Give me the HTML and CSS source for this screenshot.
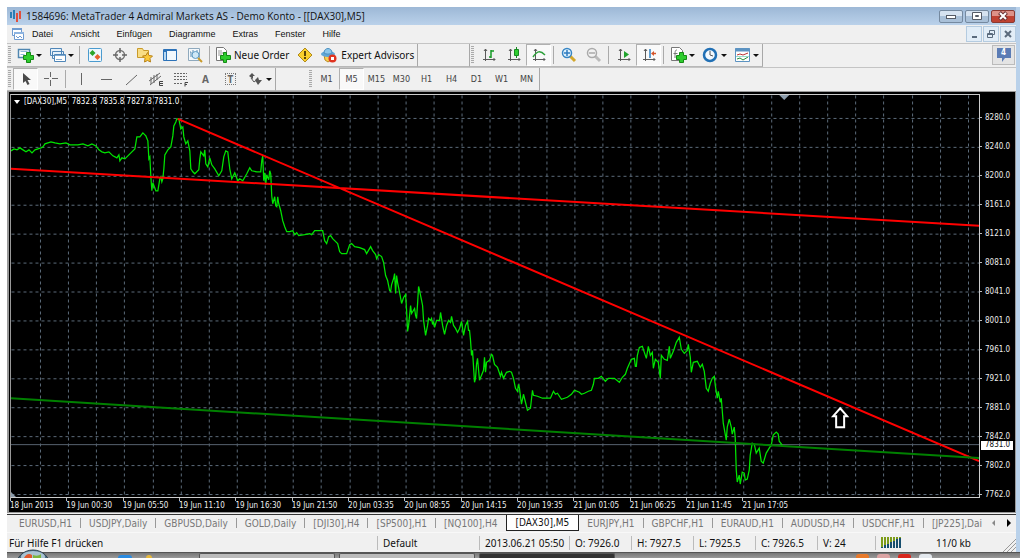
FILE: index.html
```html
<!DOCTYPE html>
<html lang="de">
<head>
    <meta charset="utf-8">
    <title>1584696: MetaTrader 4 Admiral Markets AS - Demo Konto - [[DAX30],M5]</title>
    <link rel="stylesheet" href="styles.css">
</head>
<body>
<div class="window">
    <header class="titlebar">
        <svg class="logo" width="12" height="14" viewBox="0 0 12 14"><path d="M1 3v6M4 1v9" stroke="#2a7fb5" stroke-width="2"/><path d="M7 4v9M10 2v8" stroke="#e0503c" stroke-width="2"/></svg>
        <h1>1584696: MetaTrader 4 Admiral Markets AS - Demo Konto - [[DAX30],M5]</h1>
        <div class="winbuttons">
            <button aria-label="Minimieren"><svg width="12" height="10" viewBox="0 0 12 10"><rect x="1.500" y="4.500" width="9" height="3" fill="#fff" stroke="#555b66"/></svg></button>
            <button aria-label="Maximieren"><svg width="12" height="10" viewBox="0 0 12 10"><path d="M1.500 1.500h9v7h-9zM4.500 4.500h3v1h-3z" fill="#fff" stroke="#555b66"/></svg></button>
            <button class="close" aria-label="Schließen"><svg width="12" height="10" viewBox="0 0 12 10"><path d="M2.500 1.500l7 7M9.500 1.500l-7 7" stroke="#6a3030" stroke-width="4"/><path d="M3 2l6 6M9 2l-6 6" stroke="#fff" stroke-width="2"/></svg></button>
        </div>
    </header>

    <nav class="menubar">
        <svg class="docicon" width="14" height="14" viewBox="0 0 14 14"><path d="M1.500 1.500h9v7h-9z" fill="#fff" stroke="#6f9bd0"/><path d="M1 2h10" stroke="#6f9bd0" stroke-width="2"/><path d="M3.500 5.500h9v7h-9z" fill="#fff" stroke="#6f9bd0"/><path d="M3 6h10" stroke="#8db4e0" stroke-width="2"/><path d="M5 9l2 2 2-2 2 2" fill="none" stroke="#6f9bd0"/></svg>
        <a href="#">Datei</a>
        <a href="#">Ansicht</a>
        <a href="#">Einfügen</a>
        <a href="#">Diagramme</a>
        <a href="#">Extras</a>
        <a href="#">Fenster</a>
        <a href="#">Hilfe</a>
        <div class="mdibuttons">
            <button aria-label="Diagramm minimieren"><svg width="10" height="10" viewBox="0 0 10 10"><path d="M3 8h5" stroke="#5b6b7d" stroke-width="2"/></svg></button>
            <button aria-label="Diagramm wiederherstellen"><svg width="10" height="10" viewBox="0 0 10 10"><path d="M3.500 4V1.500h5v4H7M1.500 4.500h5v4h-5zM1.500 5.500h5" fill="none" stroke="#5b6b7d"/></svg></button>
            <button aria-label="Diagramm schließen"><svg width="10" height="10" viewBox="0 0 10 10"><path d="M2 2l6 6M8 2l-6 6" stroke="#5b6b7d" stroke-width="2"/></svg></button>
        </div>
    </nav>

    <div class="toolrow">
        <div class="group">
            <i class="grip"></i>
            <button class="tool drop" aria-label="Neues Diagramm"><svg width="18" height="16" viewBox="0 0 18 16"><path d="M1.500 2.500h11v8h-11z" fill="#fff" stroke="#4f86b0" stroke-width="1.500"/><path d="M3.500 4.500h7M3.500 7.500h4" stroke="#8db8d8"/><path d="M9.500 5.500h4v3h3v4h-3v3h-4v-3h-3v-4h3z" fill="#2ecc2e" stroke="#158a15"/></svg></button>
            <button class="tool drop" aria-label="Profile"><svg width="18" height="16" viewBox="0 0 18 16"><path d="M1.500 1.500h11v7h-11zM3.500 4.500h11v7h-11z" fill="#e6f1fa" stroke="#4f86b8"/><path d="M5.500 7.500h11v7h-11z" fill="#fff" stroke="#4f86b8"/><path d="M6 8.500h10M7 12.500h6" stroke="#7fa9cf"/></svg></button>
            <i class="sep"></i>
            <button class="tool" aria-label="Marktübersicht"><svg width="16" height="16" viewBox="0 0 16 16"><rect x="1.500" y="1.500" width="13" height="13" rx="1" fill="#eef7fd" stroke="#4b9bcf"/><path d="M5.500 3l3 3-3 3-3-3z" fill="#2ba52b"/><path d="M10.500 7l3 3-3 3-3-3z" fill="#e8622c"/></svg></button>
            <button class="tool" aria-label="Datenfenster"><svg width="16" height="16" viewBox="0 0 16 16"><circle cx="8" cy="8" r="4.500" fill="none" stroke="#777" stroke-width="1.500"/><path d="M8 1v5M8 10v5M1 8h5M10 8h5" stroke="#666" stroke-width="1.500"/></svg></button>
            <button class="tool" aria-label="Navigator"><svg width="16" height="16" viewBox="0 0 16 16"><path d="M.5 1.500h5l1 2h5v7H.5z" fill="#f8dd85" stroke="#c99a2a"/><path d="M10.500 5.500l1.500 3 3.500.5-2.500 2.500.5 3.500-3-1.500-3 1.500.5-3.500L5.500 9 9 8.500z" fill="#fbc93a" stroke="#b8831a"/></svg></button>
            <button class="tool" aria-label="Terminal"><svg width="16" height="16" viewBox="0 0 16 16"><rect x="1" y="2" width="14" height="12" rx="1" fill="#2c72b8"/><path d="M5 4h9v9H5z" fill="#f2f8fd"/><path d="M2 5h2v8H2z" fill="#b9d8f0"/></svg></button>
            <button class="tool" aria-label="Strategietester"><svg width="16" height="16" viewBox="0 0 16 16"><path d="M1.500 1.500h11v12h-11z" fill="#f4f8fb" stroke="#8fa9bd"/><path d="M3 5h1v5M6 3v4M10 3v3" fill="none" stroke="#5d8fb5"/><circle cx="8.500" cy="8" r="3.500" fill="#cfe8f7" stroke="#5d9ac4"/><path d="M11 11l4 4" stroke="#c99a2a" stroke-width="2"/></svg></button>
            <i class="sep"></i>
            <button class="tool wide"><svg width="16" height="16" viewBox="0 0 16 16"><path d="M1.500.5h7l3 3v10h-10z" fill="#fff" stroke="#777"/><path d="M3 4h4M3 6h6M3 8h4" stroke="#999"/><path d="M8.500 5.500h3v3h4v4h-4v3h-3v-3h-3v-4h3z" fill="#2ecc2e" stroke="#158a15"/></svg>Neue Order</button>
            <button class="tool" aria-label="MetaEditor"><svg width="16" height="16" viewBox="0 0 16 16"><path d="M8 1l7 7-7 7-7-7z" fill="#fbd02c" stroke="#b08a1c"/><path d="M8 4v5M8 10v2" stroke="#5b4508" stroke-width="2"/></svg></button>
            <button class="tool wide"><svg width="18" height="16" viewBox="0 0 18 16"><path d="M4 8h8l-1 5-3 2-3-2z" fill="#f7cf52" stroke="#bb8b22"/><ellipse cx="8" cy="7" rx="7" ry="3" fill="#5ea6d6"/><path d="M4 6c0-6 8-6 8 0-2 1.500-6 1.500-8 0z" fill="#8cc7ea" stroke="#4b8fbf"/><circle cx="12.500" cy="11.500" r="4" fill="#e03420"/><path d="M11 10h3v3h-3z" fill="#fff"/></svg>Expert Advisors</button>
        </div>
        <div class="group blank"></div>
        <div class="group">
            <i class="grip"></i>
            <button class="tool" aria-label="Balkendiagramm"><svg width="16" height="16" viewBox="0 0 16 16"><path d="M4.500 2v12M2 12.500h12M3 4l1.500-2L6 4M12.500 11l1.500 1.500-1.500 1.500" fill="none" stroke="#5a5a5a"/><path d="M10 3v8M10 4h3M8 10h2" stroke="#169a26" stroke-width="1.500"/></svg></button>
            <button class="tool" aria-label="Kerzen"><svg width="16" height="16" viewBox="0 0 16 16"><path d="M4.500 2v12M2 12.500h12M3 4l1.500-2L6 4M12.500 11l1.500 1.500-1.500 1.500" fill="none" stroke="#5a5a5a"/><path d="M10.500 0v11" stroke="#168a20"/><path d="M8.500 2.500h4v6h-4z" fill="#2ecc2e" stroke="#168a20"/></svg></button>
            <button class="tool pressed" aria-label="Linienchart"><svg width="16" height="16" viewBox="0 0 16 16"><path d="M4.500 2v12M2 12.500h12M3 4l1.500-2L6 4M12.500 11l1.500 1.500-1.500 1.500" fill="none" stroke="#5a5a5a"/><path d="M2 10c4-6 7-7 12-2" fill="none" stroke="#2ca03a" stroke-width="1.500"/></svg></button>
            <i class="sep"></i>
            <button class="tool" aria-label="Vergrößern"><svg width="16" height="16" viewBox="0 0 16 16"><path d="M9 9l5 5" stroke="#d3a72c" stroke-width="3"/><circle cx="6" cy="6" r="4.500" fill="#e0f2fd" stroke="#3685c5" stroke-width="1.500"/><path d="M6 3v6M3 6h6" stroke="#2f7cc0" stroke-width="1.500"/></svg></button>
            <button class="tool" aria-label="Verkleinern"><svg width="16" height="16" viewBox="0 0 16 16"><path d="M9 9l5 5" stroke="#bbb" stroke-width="3"/><circle cx="6" cy="6" r="4.500" fill="#f2f2f2" stroke="#aaa" stroke-width="1.500"/><path d="M3 6h6" stroke="#aaa" stroke-width="1.500"/></svg></button>
            <i class="sep"></i>
            <button class="tool" aria-label="Automatisch scrollen"><svg width="16" height="16" viewBox="0 0 16 16"><path d="M4.500 2v12M2 12.500h12M3 4l1.500-2L6 4M12.500 11l1.500 1.500-1.500 1.500" fill="none" stroke="#5a5a5a"/><path d="M8 4l5 3.500L8 11z" fill="#1fa32c"/></svg></button>
            <button class="tool pressed" aria-label="Chartverschiebung"><svg width="16" height="16" viewBox="0 0 16 16"><path d="M4.500 2v12M2 12.500h12M3 4l1.500-2L6 4M12.500 11l1.500 1.500-1.500 1.500" fill="none" stroke="#5a5a5a"/><path d="M9 2v9" stroke="#2c7fc0" stroke-width="1.500"/><path d="M15 6.500h-3" stroke="#d3542a" stroke-width="1.500"/><path d="M13 4v5l-3-2.500z" fill="#d3542a"/></svg></button>
            <i class="sep"></i>
            <button class="tool drop" aria-label="Indikatoren"><svg width="18" height="16" viewBox="0 0 18 16"><path d="M1.500.5h8l3 3v10h-11z" fill="#fff" stroke="#777"/><path d="M7 3C5 3 5 4 5 11M3.500 6.500h4" fill="none" stroke="#777"/><path d="M9.500 5.500h4v3h3v4h-3v3h-4v-3h-3v-4h3z" fill="#2ecc2e" stroke="#158a15"/></svg></button>
            <button class="tool drop" aria-label="Zeitrahmen"><svg width="18" height="16" viewBox="0 0 18 16"><circle cx="8" cy="8" r="6" fill="#f4faff" stroke="#2170b5" stroke-width="2.500"/><path d="M8 4v4l3 1" fill="none" stroke="#555"/></svg></button>
            <button class="tool drop" aria-label="Vorlagen"><svg width="18" height="16" viewBox="0 0 18 16"><path d="M1.500 1.500h14v13h-14z" fill="#fff" stroke="#5c93c2"/><path d="M1 3h15" stroke="#5c93c2" stroke-width="3"/><path d="M3 8l3-1 3 1 5-2" fill="none" stroke="#b33"/><path d="M3 12l3-1 3 2 5-3" fill="none" stroke="#2a8f3a"/><path d="M2 9.500h13" stroke="#9dc"/></svg></button>
        </div>
        <button class="notify" aria-label="4 Nachrichten"><svg width="16" height="16" viewBox="0 0 16 16"><path d="M1 1h14v10h-6l-3 4v-4H1z" fill="#5b7cb5"/></svg><span>4</span></button>
    </div>

    <div class="toolrow">
        <div class="group">
            <i class="grip"></i>
            <button class="tool pressed" aria-label="Cursor"><svg width="16" height="16" viewBox="0 0 16 16"><path d="M5 2v10l2.500-2 2 4 2-1-2-4H13z" fill="#4a4a4a"/></svg></button>
            <button class="tool" aria-label="Fadenkreuz"><svg width="16" height="16" viewBox="0 0 16 16"><path d="M7.500 1v5M7.500 9v6M1 7.500h5M9 7.500h6" stroke="#666"/></svg></button>
            <i class="sep"></i>
            <button class="tool" aria-label="Vertikale Linie"><svg width="16" height="16" viewBox="0 0 16 16"><path d="M8.500 2v12" stroke="#666"/></svg></button>
            <button class="tool" aria-label="Horizontale Linie"><svg width="16" height="16" viewBox="0 0 16 16"><path d="M3 8.500h11" stroke="#666"/></svg></button>
            <button class="tool" aria-label="Trendlinie"><svg width="16" height="16" viewBox="0 0 16 16"><path d="M3 14L14 4" stroke="#666"/></svg></button>
            <button class="tool" aria-label="Kanal"><svg width="16" height="16" viewBox="0 0 16 16"><path d="M1 10l11-8M2 14l11-9M3 6v7M6 4v8M9 3v6" stroke="#666"/><path d="M15 10.500h-3.500v4H15M12 12.500h3" fill="none" stroke="#444"/></svg></button>
            <button class="tool" aria-label="Fibonacci"><svg width="16" height="16" viewBox="0 0 16 16"><path d="M1 2.500h13M1 5.500h13M1 8.500h13M1 12.500h9" stroke="#666" stroke-dasharray="2 1"/><path d="M15 11.500h-3v4M12 13.500h2" fill="none" stroke="#444"/></svg></button>
            <button class="tool letter">A</button>
            <button class="tool letter"><span class="textbox">T</span></button>
            <button class="tool drop" aria-label="Pfeile"><svg width="18" height="16" viewBox="0 0 18 16"><path d="M5 2l3 3H6v3L2 5zM8 9l3-3 1 3h3l-4 5z" fill="#555"/><path d="M4 7l3 4 4-3" fill="none" stroke="#555"/></svg></button>
        </div>
        <div class="group gap"></div>
        <div class="group">
            <i class="grip"></i>
            <button class="tool period">M1</button>
            <button class="tool period pressed">M5</button>
            <button class="tool period">M15</button>
            <button class="tool period">M30</button>
            <button class="tool period">H1</button>
            <button class="tool period">H4</button>
            <button class="tool period">D1</button>
            <button class="tool period">W1</button>
            <button class="tool period">MN</button>
        </div>
    </div>

    <main class="chart">
        <div class="plot">
            <p class="quote">[DAX30],M5&nbsp; 7832.8 7835.8 7827.8 7831.0</p>
            <svg viewBox="11 94 969 403" preserveAspectRatio="none">
                <!-- grid -->
                <g class="grid" transform="translate(.5 .5)">
                    <path d="M40 94V497M68 94V497M96 94V497M124 94V497M153 94V497M181 94V497M209 94V497M237 94V497M265 94V497M293 94V497M321 94V497M350 94V497M378 94V497M406 94V497M434 94V497M462 94V497M490 94V497M519 94V497M547 94V497M575 94V497M603 94V497M631 94V497M659 94V497M687 94V497M716 94V497M744 94V497M772 94V497M800 94V497M828 94V497M856 94V497M884 94V497M913 94V497M941 94V497M969 94V497"/>
                    <path d="M11 117H980M11 146H980M11 175H980M11 204H980M11 233H980M11 262H980M11 291H980M11 320H980M11 349H980M11 378H980M11 407H980M11 436H980M11 465H980M11 494H980"/>
                </g>
                <path class="bid" d="M11 444.500H980"/>
                <!-- price -->
                <polyline class="price" points="11,150 14,148 17,149 20,147 23,149 26,151 29,149 32,152 35,149 38,148 41,147 43,146 45,143 48,142 51,141 55,142 60,143 66,142 70,144 78,144 83,143 88,145 92,143 96,145 99,149 102,151 105,152 109,151 113,155 117,157 119,154 120,160 122,157 125,158 128,155 131,152 135,148 136,142 137,136 140,136 143,132 146,135 148,140 149,158 150,156 151,176 152,190 153,182 156,190 158,190 160,178 161,176 162,181 163,178 164,168 165,154 168,149 171,146 173,135 174,125 176,121 177,118 179,118 181,128 183,126 184,136 186,143 188,140 190,150 191,168 193,171 195,173 199,169 200,158 201,151 204,155 205,149 206,163 208,166 210,157 212,164 215,168 219,175 222,170 224,156 226,150 228,151 230,168 232,178 235,172 238,180 240,178 243,180 247,173 250,167 252,170 257,171 261,171 262,160 263,155 264,180 265,172 266,184 267,174 269,179 270,170 271,173 272,195 273,203 275,196 276,205 277,206 278,196 279,203 281,210 283,220 285,226 287,231 290,231 293,230 295,234 297,232 299,235 305,234 310,233 312,234 315,230 323,230 325,240 327,243 329,236 331,235 333,238 335,240 338,243 340,251 342,253 347,253 350,244 352,243 355,246 360,247 365,249 367,253 371,246 373,250 376,254 377,258 379,254 382,256 384,262 386,275 388,280 390,290 391,291 392,284 394,278 395,273 396,293 397,275 398,282 400,292 402,303 404,297 406,294 407,310 408,331 409,325 411,305 412,313 415,308 416,315 417,318 418,303 419,286 420,290 422,300 423,305 424,320 426,335 428,325 429,318 431,320 432,318 433,324 434,321 435,327 437,320 440,320 441,312 443,325 445,334 447,325 449,320 451,322 452,316 454,325 456,328 458,332 460,328 462,321 464,335 466,325 468,321 469,330 470,330 471,340 472,355 473,350 475,382 476,378 477,364 478,358 480,380 482,375 484,370 485,357 486,372 487,362 490,360 492,354 493,355 495,364 498,367 501,376 502,372 504,378 507,372 510,371 512,372 514,378 516,388 518,391 519,384 520,388 522,404 524,394 526,402 528,410 531,408 533,390 534,395 538,396 543,398 551,398 554,391 556,394 558,393 562,399 568,397 572,394 575,390 580,392 582,394 585,393 589,391 592,390 594,384 595,378 599,378 602,376 606,381 609,378 615,378 620,382 623,377 626,374 628,368 632,359 635,358 636,366 637,366 638,355 640,347 643,346 645,352 647,358 649,346 651,355 653,352 654,368 656,359 659,362 661,378 662,355 665,359 668,360 670,346 671,358 674,351 677,342 680,337 682,349 685,353 688,350 689,344 691,357 692,372 694,362 698,361 701,367 703,364 705,371 707,388 709,391 711,383 713,378 715,376 716,385 718,398 719,391 721,402 722,398 724,423 727,440 728,427 730,419 732,427 733,434 735,427 736,438 737,470 738,482 740,475 741,484 743,472 745,473 746,480 748,479 750,470 751,455 753,443 755,444 757,453 760,448 762,461 764,463 767,453 770,448 772,445 774,435 777,432 779,434 780,441 783,445"/>
                <!-- trend lines -->
                <path class="resist" d="M178 118L980 461M11 168L980 225"/>
                <path class="support" d="M11 398L980 458"/>
                <path class="marker" d="M780 94h10l-5 5zM11 492v5h5z"/>
                <path class="arrow" d="M841 408l7 8h-3v11h-8v-11h-3z"/>
            </svg>
        </div>
        <ul class="prices">
            <li>8280.0</li>
            <li>8240.0</li>
            <li>8200.0</li>
            <li>8161.0</li>
            <li>8121.0</li>
            <li>8081.0</li>
            <li>8041.0</li>
            <li>8001.0</li>
            <li>7961.0</li>
            <li>7921.0</li>
            <li>7881.0</li>
            <li>7842.0</li>
            <li>7802.0</li>
            <li>7762.0</li>
            <li class="current">7831.0</li>
        </ul>
        <ul class="times">
            <li>18 Jun 2013</li>
            <li>19 Jun 00:30</li>
            <li>19 Jun 05:50</li>
            <li>19 Jun 11:10</li>
            <li>19 Jun 16:30</li>
            <li>19 Jun 21:50</li>
            <li>20 Jun 03:35</li>
            <li>20 Jun 08:55</li>
            <li>20 Jun 14:15</li>
            <li>20 Jun 19:35</li>
            <li>21 Jun 01:05</li>
            <li>21 Jun 06:25</li>
            <li>21 Jun 11:45</li>
            <li>21 Jun 17:05</li>
        </ul>
    </main>

    <nav class="tabs">
        <div class="tablist">
            <a href="#">EURUSD,H1</a>
            <a href="#">USDJPY,Daily</a>
            <a href="#">GBPUSD,Daily</a>
            <a href="#">GOLD,Daily</a>
            <a href="#">[DJI30],H4</a>
            <a href="#">[SP500],H1</a>
            <a href="#" class="last">[NQ100],H4</a>
            <a href="#" class="active">[DAX30],M5</a>
            <a href="#">EURJPY,H1</a>
            <a href="#">GBPCHF,H1</a>
            <a href="#">EURAUD,H1</a>
            <a href="#">AUDUSD,H4</a>
            <a href="#">USDCHF,H1</a>
            <a href="#" class="last">[JP225],Dai</a>
        </div>
        <button aria-label="Zurück"><svg width="6" height="8" viewBox="0 0 6 8"><path d="M4 1v6L1 4z" fill="#888"/></svg></button>
        <button aria-label="Weiter"><svg width="6" height="8" viewBox="0 0 6 8"><path d="M1 0v8l4-4z" fill="#000"/></svg></button>
    </nav>

    <footer class="status">
        <span class="help">Für Hilfe F1 drücken</span>
        <span class="profile">Default</span>
        <span class="date">2013.06.21 05:50</span>
        <span class="value">O: 7926.0</span>
        <span class="value">H: 7927.5</span>
        <span class="value">L: 7925.5</span>
        <span class="value">C: 7926.5</span>
        <span class="volume">V: 24</span>
        <span class="traffic"><svg width="21" height="11" viewBox="0 0 21 11" shape-rendering="crispEdges"><path d="M1 0v11M4 0v11M7 0v11M10 0v11M13 0v11M16 0v11M19 0v11" stroke="#7d9c18" stroke-width="2"/><path d="M1 10v1M4 8v3M7 7v4M10 5v6M13 4v7M16 2v9M19 1v10" stroke="#174f6e" stroke-width="2"/></svg>11/0 kb</span>
        <svg class="resize" width="14" height="14" viewBox="0 0 14 14"><path d="M1 14L14 1M5 14l9-9M9 14l5-5" stroke="#999"/></svg>
    </footer>
</div>

<div class="taskbar">
    <svg class="orb" width="36" height="9" viewBox="0 0 36 9"><ellipse cx="18" cy="17" rx="17" ry="16" fill="#4d6f86" stroke="#2c3e4a"/><ellipse cx="18" cy="8" rx="12" ry="6" fill="#a9c3d2"/><path d="M9 9c2-4 5-5 8-3v3z" fill="#e2582b"/><path d="M18 9V6c3 1 6 1 8-1v4z" fill="#7db53c"/></svg>
    <i class="quick blue"></i>
    <i class="quick gold"></i>
    <i class="task"></i>
    <i class="task"></i>
    <i class="task dark"></i>
    <i class="tray orange"></i>
    <i class="tray pink"></i>
    <i class="tray red"></i>
    <i class="tray white"></i>
</div>
</body>
</html>
```
FILE: styles.css
```css
* {
    box-sizing: border-box;
}
body {
    margin: 0;
    padding: 7px 4px 0 7px;
    height: 100vh;
    display: flex;
    flex-direction: column;
    overflow: hidden;
    background: #fff;
    color: #111;
    font-family: "DejaVu Sans Condensed", "Noto Sans", sans-serif;
    font-size: 10px;
}
ul, p, h1 {
    margin: 0;
    padding: 0;
    list-style: none;
    font-weight: normal;
}
a {
    color: inherit;
    text-decoration: none;
}
button {
    margin: 0;
    padding: 0;
    border: 1px solid transparent;
    background: none;
    color: inherit;
    font: inherit;
    display: flex;
    align-items: center;
    justify-content: center;
}
svg {
    display: block;
    flex: none;
}

.window {
    flex: 1;
    min-height: 0;
    display: flex;
    flex-direction: column;
    background: #f0f0f0;
    border-right: 4px solid #b9d1ea;
}

/* title and menu */
.titlebar {
    height: 18px;
    display: flex;
    align-items: center;
    padding: 0 1px 0 3px;
    background: linear-gradient(#9db8d6, #bad1ea);
}
.titlebar h1 {
    flex: 1;
    margin-left: 4px;
    font-family: "Open Sans", "Noto Sans", sans-serif;
    font-size: 10px;
    color: #111;
}
.winbuttons {
    display: flex;
    gap: 2px;
}
.winbuttons button {
    width: 24px;
    height: 13px;
    border: 1px solid #75899f;
    border-radius: 2px;
    background: linear-gradient(#d5e2f0 50%, #a9c0d8 50%);
}
.winbuttons .close {
    border-color: #8a3a32;
    background: linear-gradient(#dd9288 50%, #bf4232 50%);
}
.menubar {
    height: 18px;
    display: flex;
    align-items: center;
    gap: 17px;
    padding-left: 4px;
    font-family: "Liberation Sans", sans-serif;
    font-size: 9px;
}
.docicon {
    margin-right: -10px;
}
.mdibuttons {
    display: flex;
    gap: 1px;
    margin-left: auto;
}
.mdibuttons button {
    width: 16px;
    height: 16px;
    border: 1px solid #b4cbe0;
    background: #e2edf7;
}

/* toolbars */
.toolrow {
    height: 24px;
    display: flex;
    border-top: 1px solid #c4c4c4;
}
.group {
    display: flex;
    align-items: center;
    padding-left: 1px;
    border-right: 1px solid #a8a8a8;
    border-bottom: 1px solid #b8b8b8;
}
.blank {
    width: 52px;
}
.gap {
    width: 32px;
    border-right: 0;
}
.grip {
    width: 3px;
    height: 18px;
    margin-right: 2px;
    background: repeating-linear-gradient(#aaa 0 1px, #eee 1px 2px);
}
.sep {
    width: 1px;
    height: 18px;
    margin: 0 2px;
    background: #aaa;
}
.tool {
    width: 25px;
    height: 22px;
    font-family: "Noto Sans", sans-serif;
}
.pressed {
    border-color: #b0b0b0 #fff #fff #b0b0b0;
    background: #f9f9f9;
}
.drop {
    width: 32px;
    justify-content: space-between;
    padding: 0 2px 0 3px;
}
.drop::after {
    content: "";
    border: 3px solid transparent;
    border-top-color: #111;
    border-bottom: 0;
}
.wide {
    width: auto;
    gap: 3px;
    padding: 0 2px;
}
.letter {
    font-weight: bold;
    color: #666;
}
.textbox {
    padding: 0 2px;
    border: 1px dotted #777;
    line-height: 10px;
}
.period {
    font-family: "DejaVu Sans Condensed", "Noto Sans", sans-serif;
    font-size: 9px;
    color: #444;
}
.notify {
    position: relative;
    width: 23px;
    height: 20px;
    margin: 1px 1px 0 auto;
    border: 1px solid #bbb;
    background: #e4e4e4;
}
.notify span {
    position: absolute;
    top: 2px;
    left: 8px;
    color: #fff;
    font-weight: bold;
    font-size: 8px;
}

/* chart */
.chart {
    flex: 1;
    min-height: 0;
    display: grid;
    grid-template-columns: 1fr 35px;
    grid-template-rows: 1fr 14px;
    padding: 2px 0 0 1px;
    border: solid #999;
    border-width: 1px 1px 1px 2px;
    background: #000;
    color: #eee;
    font-size: 8px;
}
.plot {
    position: relative;
    min-height: 0;
    border: 1px solid #ccc;
    border-left: 1px solid #999;
}
.plot svg {
    width: 100%;
    height: 100%;
}
.plot path, .plot polyline {
    vector-effect: non-scaling-stroke;
}
.quote {
    position: absolute;
    top: 2px;
    left: 3px;
    display: flex;
    align-items: center;
    gap: 4px;
    color: #fff;
}
.quote::before {
    content: "";
    border: 3px solid transparent;
    border-top: 4px solid #fff;
    border-bottom: 0;
}
.grid path {
    stroke: #5c6b7a;
    stroke-dasharray: 3 3;
    shape-rendering: crispEdges;
}
.bid {
    stroke: #56626e;
}
.price {
    fill: none;
    stroke: #00e400;
    stroke-width: 1.25;
}
.resist {
    stroke: #f00;
    stroke-width: 2;
}
.support {
    stroke: #008000;
    stroke-width: 2;
}
.marker {
    fill: #8c9cab;
}
.arrow {
    fill: #000;
    stroke: #fff;
    stroke-width: 2;
}
.prices {
    position: relative;
    grid-row: 1 / 3;
    grid-column: 2;
    display: flex;
    flex-direction: column;
    padding: 9px 0 3px;
}
.prices li {
    flex: 1;
    display: flex;
    align-items: center;
    padding-left: 5px;
    line-height: 8px;
    background: linear-gradient(#bbb, #bbb) 0 50% / 2px 1px no-repeat;
}
.prices .current {
    position: absolute;
    top: 83%;
    left: 1px;
    right: 2px;
    height: 9px;
    padding-left: 4px;
    background: #fff;
    color: #111;
}
.times {
    display: flex;
    min-width: 0;
}
.times li {
    flex: 0 0 5.81%;
    padding-top: 3px;
    white-space: nowrap;
    line-height: 10px;
    background: linear-gradient(#bbb, #bbb) 0 0 / 1px 3px no-repeat;
}

/* chart tabs */
.tabs {
    height: 18px;
    display: flex;
    margin-top: 1px;
    border-top: 1px solid #333;
    color: #777;
}
.tablist {
    flex: 1;
    min-width: 0;
    display: flex;
    align-items: flex-start;
    overflow: hidden;
    padding-left: 4px;
}
.tablist a {
    display: flex;
    align-items: center;
    height: 16px;
    padding: 0 9px 0 8px;
    white-space: nowrap;
    background: linear-gradient(#999, #999) 100% 50% / 1px 10px no-repeat;
}
.tablist .last {
    background: none;
}
.tablist .active {
    border: 1px solid #222;
    border-top: 0;
    background: #fff;
    color: #111;
}
.tabs button {
    width: 15px;
    height: 16px;
}

/* status bar */
.status {
    height: 20px;
    display: flex;
    align-items: center;
    padding-left: 2px;
    border-top: 1px solid #f8f8f8;
    font-family: "Noto Sans", sans-serif;
}
.status span {
    height: 14px;
    line-height: 14px;
    padding-left: 5px;
    border-left: 1px solid #bbb;
    white-space: nowrap;
}
.status .help {
    flex: 1;
    padding: 0;
    border: 0;
}
.profile {
    width: 102px;
}
.date {
    width: 90px;
}
.value {
    width: 62px;
}
.volume {
    width: 58px;
}
.traffic {
    width: 127px;
    display: flex;
    align-items: center;
    gap: 34px;
}
.resize {
    align-self: flex-end;
}

/* desktop taskbar */
.taskbar {
    height: 6px;
    display: flex;
    align-items: flex-end;
    overflow: visible;
    padding-left: 8px;
    border-top: 1px solid #555;
    background: linear-gradient(#777, #999);
}
.orb {
    margin-right: 67px;
}
.quick {
    width: 14px;
    height: 3px;
    margin-right: 14px;
    border-radius: 4px 4px 0 0;
}
.blue {
    background: #2b8be0;
}
.gold {
    width: 6px;
    margin-right: 47px;
    background: #e8b93a;
}
.task {
    width: 136px;
    height: 5px;
    margin-right: 4px;
    border: 1px solid #555;
    border-bottom: 0;
    border-radius: 2px 2px 0 0;
    background: #bbb;
}
.dark {
    margin-right: auto;
    background: #333;
}
.tray {
    width: 13px;
    height: 4px;
    margin-right: 8px;
    border-radius: 3px 3px 0 0;
}
.orange {
    background: #e87a2b;
}
.pink {
    background: #dba4a4;
}
.red {
    background: #d8261c;
}
.white {
    margin-right: 88px;
    background: #e4e9ee;
}
```
